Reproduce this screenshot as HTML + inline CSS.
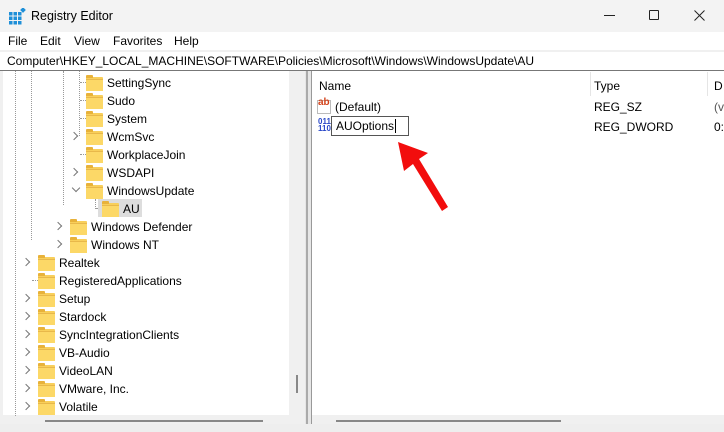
<!DOCTYPE html><html><head><style>
*{margin:0;padding:0;box-sizing:border-box}
body{width:724px;height:432px;overflow:hidden;background:#fff;font-family:"Liberation Sans",sans-serif;font-size:12px;color:#000;position:relative}
.a{position:absolute}
.f{position:absolute;width:17px;height:13px;background:#f8cf5b;border-radius:1px}
.f:before{content:"";position:absolute;left:0;top:-2px;width:7px;height:3px;background:#e8b23a;border-radius:1px 1px 0 0}
.f:after{content:"";position:absolute;left:0;top:2px;width:17px;height:11px;background:#fcd867;border-top:1px solid #e8b84a}
.t{position:absolute;white-space:nowrap;line-height:18px}
.ch{position:absolute;width:6px;height:6px;border-right:1.3px solid #777;border-bottom:1.3px solid #777;transform:rotate(-45deg)}
.cd{transform:rotate(45deg)}
.vl{position:absolute;border-left:1px dotted #999}
.hl{position:absolute;border-top:1px dotted #999;width:10px}
</style></head><body>
<div class="a" style="left:0;top:0;width:724px;height:32px;background:#f3f3f3"></div>
<svg class="a" style="left:9px;top:8px" width="17" height="17" viewBox="0 0 17 17"><g fill="#1e8fd8"><rect x="0" y="4" width="3.5" height="3.5"/><rect x="4.5" y="4" width="3.5" height="3.5"/><rect x="9" y="4" width="3.5" height="3.5"/><rect x="0" y="8.5" width="3.5" height="3.5"/><rect x="4.5" y="8.5" width="3.5" height="3.5"/><rect x="9" y="8.5" width="3.5" height="3.5"/><rect x="0" y="13" width="3.5" height="3.5"/><rect x="4.5" y="13" width="3.5" height="3.5"/><rect x="9" y="13" width="3.5" height="3.5"/><rect x="12" y="0" width="4" height="4" transform="rotate(45 14 2)"/></g></svg>
<div class="t" style="left:31px;top:7px;font-size:12.5px">Registry Editor</div>
<div class="a" style="left:604px;top:15px;width:11px;border-top:1px solid #222"></div>
<div class="a" style="left:649px;top:10px;width:10px;height:10px;border:1px solid #222;border-radius:1px"></div>
<svg class="a" style="left:694px;top:10px" width="11" height="11"><path d="M0.5 0.5L10.5 10.5M10.5 0.5L0.5 10.5" stroke="#222" stroke-width="1"/></svg>
<div class="t" style="left:8px;top:32px">File</div>
<div class="t" style="left:40px;top:32px">Edit</div>
<div class="t" style="left:74px;top:32px">View</div>
<div class="t" style="left:113px;top:32px">Favorites</div>
<div class="t" style="left:174px;top:32px">Help</div>
<div class="a" style="left:0;top:50px;width:724px;height:2px;background:#f0f0f0"></div>
<div class="t" style="left:7px;top:52px">Computer\HKEY_LOCAL_MACHINE\SOFTWARE\Policies\Microsoft\Windows\WindowsUpdate\AU</div>
<div class="a" style="left:0;top:70px;width:724px;height:1px;background:#777"></div>
<div class="a" style="left:0;top:71px;width:3px;height:353px;background:#f0f0f0"></div>
<div class="a" style="left:289px;top:71px;width:16px;height:345px;background:#f0f0f0"></div>
<div class="a" style="left:296px;top:375px;width:2px;height:18px;background:#888"></div>
<div class="a" style="left:3px;top:415px;width:302px;height:10px;background:#f0f0f0"></div>
<div class="a" style="left:45px;top:420px;width:218px;height:2px;background:#888"></div>
<div class="a" style="left:305px;top:71px;width:6px;height:361px;background:#e6e6e6"></div>
<div class="a" style="left:306px;top:71px;width:2px;height:361px;background:#aaa"></div>
<div class="a" style="left:311px;top:71px;width:1px;height:353px;background:#999"></div>
<div class="a" style="left:312px;top:415px;width:412px;height:10px;background:#f0f0f0"></div>
<div class="a" style="left:336px;top:420px;width:225px;height:2px;background:#888"></div>
<div class="a" style="left:0;top:424px;width:724px;height:8px;background:#eee"></div>
<div class="vl" style="left:15px;top:71px;height:345px"></div>
<div class="vl" style="left:31px;top:71px;height:169px"></div>
<div class="vl" style="left:63px;top:71px;height:134px"></div>
<div class="vl" style="left:79px;top:71px;height:65px"></div>
<div class="vl" style="left:95px;top:199px;height:10px"></div>
<div class="hl" style="left:80px;top:82px"></div><div class="hl" style="left:80px;top:100px"></div><div class="hl" style="left:80px;top:118px"></div><div class="hl" style="left:80px;top:154px"></div>
<div class="hl" style="left:96px;top:208px;width:6px"></div><div class="hl" style="left:32px;top:280px"></div>
<div class="a" style="left:98px;top:199px;width:44px;height:18px;background:#ddd"></div>
<div id="tree"></div>
<div class="a" style="left:590px;top:72px;width:1px;height:24px;background:#e5e5e5"></div>
<div class="a" style="left:707px;top:72px;width:1px;height:24px;background:#e5e5e5"></div>
<div class="t" style="left:319px;top:77px">Name</div>
<div class="t" style="left:594px;top:77px">Type</div>
<div class="t" style="left:714px;top:77px">D</div>
<div class="a" style="left:317px;top:100px;width:14px;height:14px;border:1px solid #bbb;background:#fff"></div>
<div class="t" style="left:318px;top:98px;font-size:10px;color:#d2421a;font-weight:bold;line-height:10px">ab</div>
<div class="t" style="left:335px;top:98px">(Default)</div>
<div class="t" style="left:594px;top:98px">REG_SZ</div>
<div class="t" style="left:714px;top:98px;color:#555">(v</div>
<div class="t" style="left:318px;top:118px;font-size:8px;color:#2a48c8;font-weight:bold;line-height:7px">011<br>110</div>
<div class="a" style="left:331px;top:116px;width:78px;height:20px;border:1px solid #555;background:#fff"></div>
<div class="t" style="left:336px;top:117px">AUOptions<span style="border-left:1px solid #000;margin-left:1px"></span></div>
<div class="t" style="left:594px;top:118px">REG_DWORD</div>
<div class="t" style="left:714px;top:118px">0:</div>
<svg class="a" style="left:390px;top:135px" width="70" height="80"><path d="M8 7 L38 18 L29 24 L58 72 L52 76 L23 29 L14 36 Z" fill="#f20d0d"/></svg>
<script>
var R=[["SettingSync",86,0],["Sudo",86,0],["System",86,0],["WcmSvc",86,1],["WorkplaceJoin",86,0],["WSDAPI",86,1],["WindowsUpdate",86,2],["AU",102,0],["Windows Defender",70,1],["Windows NT",70,1],["Realtek",38,1],["RegisteredApplications",38,0],["Setup",38,1],["Stardock",38,1],["SyncIntegrationClients",38,1],["VB-Audio",38,1],["VideoLAN",38,1],["VMware, Inc.",38,1],["Volatile",38,1]];
var h="";R.forEach(function(r,i){var y=73+18*i;
h+='<div class="f" style="left:'+r[1]+'px;top:'+(y+4)+'px"></div><div class="t" style="left:'+(r[1]+21)+'px;top:'+(y+1)+'px">'+r[0]+'</div>';
if(r[2]==1)h+='<div class="ch" style="left:'+(r[1]-15)+'px;top:'+(y+6)+'px"></div>';
if(r[2]==2)h+='<div class="ch cd" style="left:'+(r[1]-13)+'px;top:'+(y+4)+'px"></div>';});
document.getElementById("tree").innerHTML=h;
</script>
</body></html>
